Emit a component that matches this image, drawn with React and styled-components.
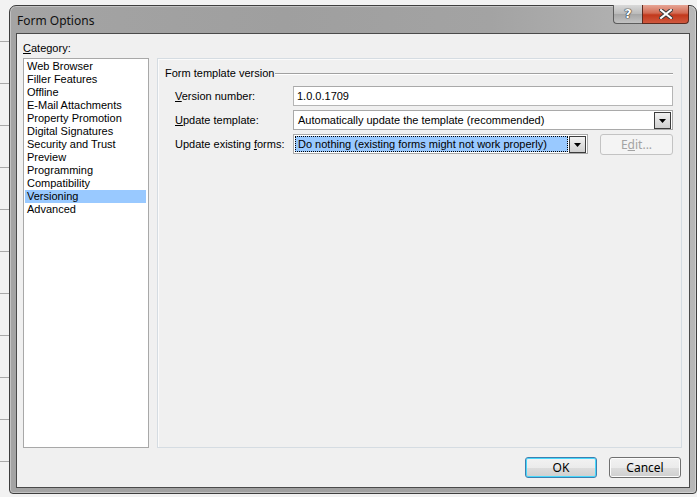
import React from 'react'
import styled, { createGlobalStyle } from 'styled-components'

const Global = createGlobalStyle`
  html, body { margin: 0; padding: 0; }
  body { width: 697px; height: 497px; overflow: hidden; background: #efefef; }
`

const categories = [
  'Web Browser', 'Filler Features', 'Offline', 'E-Mail Attachments', 'Property Promotion',
  'Digital Signatures', 'Security and Trust', 'Preview', 'Programming', 'Compatibility',
  'Versioning', 'Advanced',
]

export default function App() {
  return (
    <>
      <Global />
      <Desktop>
        <Window>
          <TitleBar>
            <Title>Form Options</Title>
            <Controls>
              <HelpButton>?</HelpButton>
              <CloseButton>
                <svg width="14" height="10" viewBox="0 0 14 10">
                  <path d="M2 1 L12 9 M12 1 L2 9" stroke="#3a3a3a" strokeWidth="4" strokeLinecap="square" />
                  <path d="M2 1 L12 9 M12 1 L2 9" stroke="#fff" strokeWidth="2" strokeLinecap="square" />
                </svg>
              </CloseButton>
            </Controls>
          </TitleBar>
          <Client>
            <Heading><u>C</u>ategory:</Heading>
            <Body>
              <List>
                {categories.map(c => (
                  <Item key={c} selected={c === 'Versioning'}>{c}</Item>
                ))}
              </List>
              <Panel>
                <Legend>
                  <span>Form template version</span>
                  <Rule />
                </Legend>
                <Row>
                  <Label><u>V</u>ersion number:</Label>
                  <TextBox>1.0.0.1709</TextBox>
                </Row>
                <Row>
                  <Label><u>U</u>pdate template:</Label>
                  <Select>
                    <SelectText>Automatically update the template (recommended)</SelectText>
                    <Arrow />
                  </Select>
                </Row>
                <Row>
                  <Label>Update existing <u>f</u>orms:</Label>
                  <Select width="295px">
                    <SelectText focused>Do nothing (existing forms might not work properly)</SelectText>
                    <Arrow />
                  </Select>
                  <EditButton>E<u>d</u>it...</EditButton>
                </Row>
              </Panel>
            </Body>
            <Footer>
              <Button primary>OK</Button>
              <Button>Cancel</Button>
            </Footer>
          </Client>
        </Window>
      </Desktop>
    </>
  )
}

const Arrow = () => (
  <ArrowBox>
    <svg width="7" height="4" viewBox="0 0 7 4">
      <path d="M0 0 H7 L3.5 4 Z" fill="#000" />
    </svg>
  </ArrowBox>
)

const Desktop = styled.div`
width: 697px;
height: 497px;
box-sizing: border-box;
padding: 5px 0 0 9px;
overflow: hidden;
background: repeating-linear-gradient(to bottom, #f2f2f2 0 41px, #a9a9a9 41px 42px);
`

const Window = styled.div`
width: 688px;
height: 489px;
box-sizing: border-box;
flex-shrink: 0;
border: 1px solid #3e3e3e;
border-radius: 7px 7px 4px 4px;
background: linear-gradient(to right, #a4a4a4 0%, #9f9f9f 40%, #a3a3a3 70%, #b8b8b8 100%);
padding: 0 6px 5px 6px;
display: flex;
flex-direction: column;
box-shadow: inset 0 0 0 1px rgba(255,255,255,0.35);
`

const TitleBar = styled.div`
height: 27px;
display: flex;
align-items: center;
justify-content: space-between;
`

const Title = styled.div`
font-family: "Noto Sans", "Open Sans", sans-serif;
font-size: 12px;
color: #111;
padding-left: 1px;
margin-top: 1px;
`

const Controls = styled.div`
align-self: flex-start;
display: flex;
margin-right: 1px;
margin-top: -1px;
height: 20px;
`

const HelpButton = styled.div`
width: 29px;
height: 19px;
box-sizing: border-box;
border: 1px solid #5c5c5c;
border-top: none;
border-right: none;
border-radius: 0 0 0 4px;
background: linear-gradient(to bottom, #d9d9d9 0%, #b9b9b9 50%, #a6a6a6 51%, #c2c2c2 100%);
color: #fff;
font-family: "DejaVu Sans", sans-serif;
font-weight: bold;
font-size: 13px;
text-align: center;
line-height: 18px;
text-shadow: 0 0 1px #222, 0 0 1px #222, 0 0 1px #222;
`

const CloseButton = styled.div`
width: 47px;
height: 19px;
box-sizing: border-box;
border: 1px solid #5c2a1f;
border-top: none;
border-radius: 0 0 4px 0;
background: linear-gradient(to bottom, #e6a595 0%, #d26a52 45%, #c2391c 55%, #d0583e 100%);
display: flex;
align-items: center;
justify-content: center;
`

const Client = styled.div`
flex: 1;
border: 1px solid #4a4a4a;
background: #f0f0f0;
display: flex;
flex-direction: column;
padding: 7px 7px 9px 6px;
font-family: "Liberation Sans", Arial, sans-serif;
font-size: 11px;
color: #000;
`

const Heading = styled.div`
line-height: 14px;
height: 14px;
margin-bottom: 3px;
`

const Body = styled.div`
display: flex;
gap: 8px;
height: 390px;
`

const List = styled.div`
width: 126px;
box-sizing: border-box;
border: 1px solid #a8a8a8;
background: #fff;
padding: 1px 1px;
display: flex;
flex-direction: column;
`

const Item = styled.div`
height: 13px;
line-height: 13px;
padding-left: 2px;
background: ${p => (p.selected ? '#99c9ff' : 'transparent')};
margin-right: 1px;
`

const Panel = styled.div`
flex: 1;
box-sizing: border-box;
border: 1px solid #d5dce2;
box-shadow: inset 1px 1px 0 #fbfbfb;
padding: 7px 8px 0 7px;
display: flex;
flex-direction: column;
`

const Legend = styled.div`
display: flex;
align-items: center;
height: 14px;
line-height: 14px;
margin-bottom: 6px;
`

const Rule = styled.div`
flex: 1;
height: 1px;
background: #a0a0a0;
box-shadow: 0 1px 0 #fff;
margin-left: 1px;
margin-top: 1px;
`

const Row = styled.div`
display: flex;
align-items: center;
margin-left: 10px;
margin-bottom: 4px;
height: 20px;
`

const Label = styled.div`
width: 118px;
flex-shrink: 0;
`

const TextBox = styled.div`
flex: 1;
height: 20px;
box-sizing: border-box;
border: 1px solid #b5b5b5;
border-top-color: #a9a9a9;
background: #fff;
padding: 0 3px;
line-height: 18px;
`

const Select = styled.div`
${p => (p.width ? `width: ${p.width};` : 'flex: 1;')}
flex-shrink: 0;
height: 20px;
box-sizing: border-box;
border: 1px solid #a9a9a9;
background: #fff;
display: flex;
align-items: center;
padding: 1px;
`

const SelectText = styled.div`
flex: 1;
height: 16px;
box-sizing: border-box;
line-height: 14px;
padding: 0 2px;
margin-right: 1px;
background: ${p => (p.focused ? '#99c9ff' : 'transparent')};
border: 1px ${p => (p.focused ? 'dotted #000' : 'solid transparent')};
white-space: nowrap;
overflow: hidden;
`

const ArrowBox = styled.div`
width: 17px;
height: 17px;
box-sizing: border-box;
border: 1px solid #3c3c3c;
background: linear-gradient(to bottom, #f2f2f2 0%, #e0e0e0 50%, #d0d0d0 100%);
display: flex;
align-items: center;
justify-content: center;
padding-top: 1px;
`

const EditButton = styled.div`
width: 73px;
height: 21px;
margin-left: 12px;
margin-top: 1px;
box-sizing: border-box;
border: 1px solid #c3c3c3;
border-radius: 3px;
background: #f4f4f4;
color: #a3a3a3;
font-family: "Noto Sans", "Open Sans", sans-serif;
font-size: 12px;
display: flex;
align-items: center;
justify-content: center;
`

const Footer = styled.div`
display: flex;
justify-content: flex-end;
gap: 12px;
margin-top: 9px;
padding-right: 1px;
`

const Button = styled.div`
width: 72px;
height: 21px;
box-sizing: border-box;
border: 1px solid ${p => (p.primary ? '#3c7fb1' : '#707070')};
border-radius: 3px;
background: linear-gradient(to bottom, #f2f2f2 0%, #ebebeb 50%, #dddddd 51%, #cfcfcf 100%);
box-shadow: inset 0 0 0 1px ${p => (p.primary ? '#48d8fb' : '#fcfcfc')};
font-family: "Noto Sans", "Open Sans", sans-serif;
font-size: 12px;
color: #000;
display: flex;
align-items: center;
justify-content: center;
`
